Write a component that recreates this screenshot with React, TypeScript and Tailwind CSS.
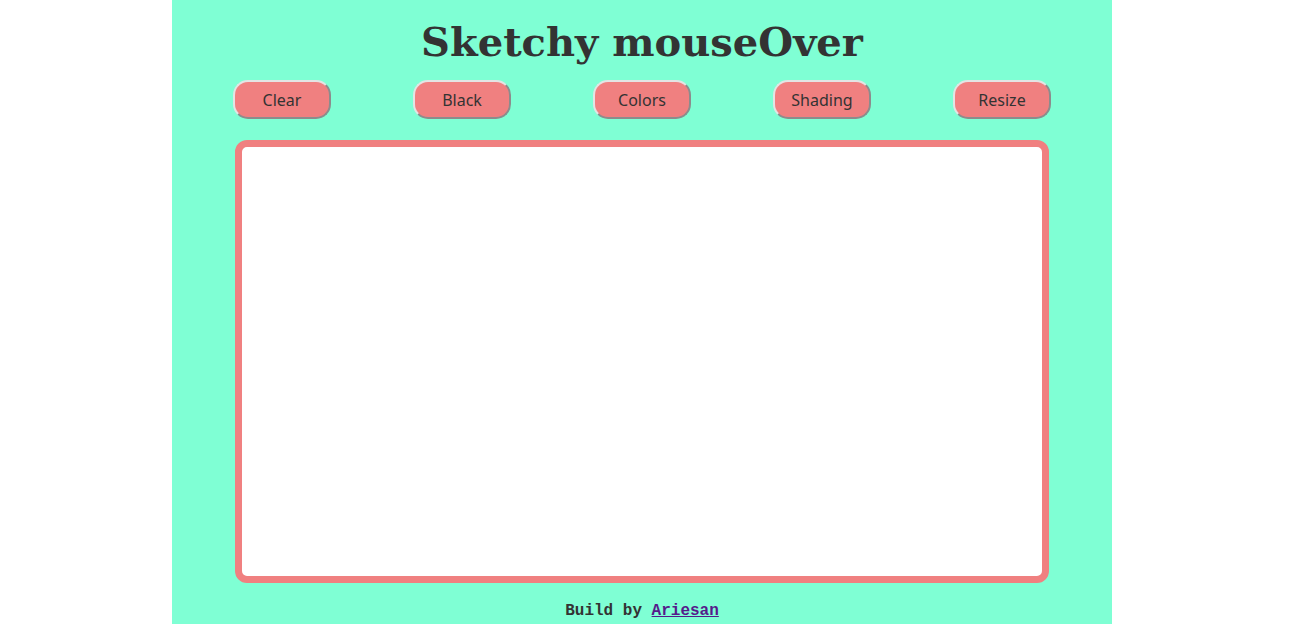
const buttons = ["Clear", "Black", "Colors", "Shading", "Resize"];

export default function App() {
  return (
    <div className="min-h-[624px] bg-white">
      <div className="ml-[172px] flex min-h-[624px] w-[940px] flex-col items-center bg-[#7fffd4] text-[#333333]">
        <h1 className="mt-[15px] text-[40px] leading-[54px] font-bold font-['DejaVu_Serif',serif]">
          Sketchy mouseOver
        </h1>

        <div className="mt-[11px] flex gap-[82px]">
          {buttons.map((label) => (
            <button
              key={label}
              className="h-[39px] w-[98px] rounded-[15px] border-2 border-t-[#e4e4e4] border-l-[#e4e4e4] border-b-[#8c8c8c] border-r-[#8c8c8c] bg-[#f08080] text-[16px] text-[#333333] font-['Noto_Sans',sans-serif]"
            >
              {label}
            </button>
          ))}
        </div>

        <div className="mt-[21px] h-[443px] w-[814px] rounded-[12px] border-[7px] border-[#f08080] bg-white" />

        <p className="mt-[18px] text-[16px] leading-[20px] font-bold font-['Liberation_Mono',monospace]">
          Build by{" "}
          <a href="#" className="text-[#551a8b] underline">
            Ariesan
          </a>
        </p>
      </div>
    </div>
  );
}
